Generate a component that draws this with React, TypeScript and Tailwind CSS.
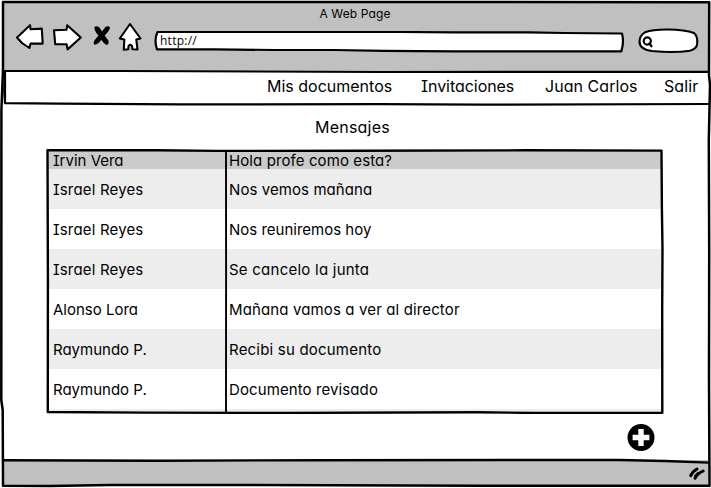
import type { ReactNode } from "react";

type Message = { from: string; text: string; fromFit: string; textFit: string };

const messages: Message[] = [
  { from: "Irvin Vera", text: "Hola profe como esta?", fromFit: "tracking-[0px]", textFit: "tracking-[0.1px]" },
  { from: "Israel Reyes", text: "Nos vemos mañana", fromFit: "tracking-[0.17px]", textFit: "tracking-[0.08px]" },
  { from: "Israel Reyes", text: "Nos reuniremos hoy", fromFit: "tracking-[0.17px]", textFit: "tracking-[0px]" },
  { from: "Israel Reyes", text: "Se cancelo la junta", fromFit: "tracking-[0.17px]", textFit: "tracking-[0.24px]" },
  { from: "Alonso Lora", text: "Mañana vamos a ver al director", fromFit: "tracking-[0px]", textFit: "tracking-[0.13px]" },
  { from: "Raymundo P.", text: "Recibi su documento", fromFit: "tracking-[0px]", textFit: "tracking-[0.2px]" },
  { from: "Raymundo P.", text: "Documento revisado", fromFit: "tracking-[0px]", textFit: "tracking-[0.1px]" },
];

function Ink({ w, h, children }: { w: number; h: number; children: ReactNode }) {
  return (
    <svg
      className="pointer-events-none absolute top-0 left-0"
      width={w}
      height={h}
      viewBox={`0 0 ${w} ${h}`}
      fill="none"
      stroke="#000"
      strokeWidth="2.2"
      strokeLinecap="round"
      strokeLinejoin="round"
    >
      {children}
    </svg>
  );
}

function Toolbar() {
  return (
    <div className="flex h-[46px] items-start pl-[13px]">
      <svg className="shrink-0" width="135" height="30" viewBox="15 22 135 30" fill="#fff" stroke="#000" strokeWidth="2.1" strokeLinejoin="round">
        <path d="M17 37.5 L30 25.2 L30.6 29.3 L41.8 28.6 L42.7 43.6 L30.6 43.5 L29.4 48 L22 43 Z" />
        <path d="M54 30.2 L66.5 29.8 L67.2 25.2 L80.8 37.5 L67.6 49.4 L66.6 44.2 L55.2 44.2 Z" />
        <path
          fill="#000"
          stroke="none"
          d="M94.3 27.3 Q96.5 25 99.5 27.6 L102 31.6 L105.6 26.8 Q108.5 25.3 110 27.2 Q109.5 31 104.6 35.4 L108.4 40.5 Q109.3 44.5 106.5 45 Q103.5 43.5 101.3 39.8 Q98.5 44.3 94.5 44.8 Q92.8 43 94.6 40.3 L98.4 35.6 Q94.5 31.5 94.3 27.3 Z"
        />
        <path d="M130 24 L140.5 38.5 L136.3 39.5 L137.5 49.5 L132.5 49.3 L132 46 Q130 43.8 128.5 46 L128.3 49.2 L123.8 49.8 L124.3 39.6 L119.8 38.5 Z" />
      </svg>
      <div className="relative mt-[9px] ml-[4px] flex h-[21px] w-[472px] items-center">
        <Ink w={472} h={22}>
          <path
            fill="#fff"
            d="M3.5 1 L100 0.9 L246 1 L300 1.4 L375 1.3 L410 2 L468 2.5 Q470.3 11 467.3 20.4 L300 20.4 L230 19.8 L180 19 L120 19 L60 18.3 L3 18.4 Q-0.2 9 3.5 1 Z"
          />
        </Ink>
        <span className="relative -top-px pl-[6px] font-['Open_Sans',sans-serif] text-[12px] leading-4 tracking-[0.25px]">http://</span>
      </div>
      <svg className="mt-[5px] ml-[11px]" width="64" height="28" viewBox="637 27 64 28" fill="#fff" stroke="#000" strokeWidth="2.1" strokeLinecap="round">
        <path d="M645 32.3 Q653 29.3 668 29.5 Q685 29.7 694 33 Q697.5 36 697.3 42 Q697.5 49 690 50.7 Q674 53 652 51 Q639.5 49.5 639.5 41.5 Q639.6 35.5 645 32.3 Z" />
        <circle cx="647.3" cy="41" r="3.6" />
        <path d="M649.5 43.5 L651.5 46.2" strokeWidth="2.3" />
      </svg>
    </div>
  );
}

export default function App() {
  return (
    <main className="relative flex h-[488px] w-[711px] flex-col overflow-hidden bg-white px-[3px] pt-[2px] font-[Inter,'Noto_Sans',sans-serif] text-[15px] leading-5 text-black [font-feature-settings:'cv11','cv08']">
      <header className="-mr-px -ml-px h-[70px] bg-[#c0c0c0]">
        <h1 className="flex h-[20px] items-center justify-center pt-[4px] pr-[1px] text-[12px] leading-4">
          <span className="tracking-[0.12px]">A Web Page</span>
        </h1>
        <Toolbar />
      </header>
      <nav className="flex h-[32px] items-center justify-end gap-[29px] bg-white pr-[9px] pb-[4px] text-[16px]">
        <a className="w-[125px] whitespace-nowrap">Mis documentos</a>
        <a className="w-[94px] tracking-[-0.05px] whitespace-nowrap">Invitaciones</a>
        <a className="ml-[1px] w-[92px] tracking-[0.05px] whitespace-nowrap">Juan Carlos</a>
        <a className="-ml-[2px] w-[35px] tracking-[0.1px] whitespace-nowrap">Salir</a>
      </nav>
      <section className="flex-1 pt-[13px]">
        <h2 className="ml-[312px] h-[20px] text-[16px] tracking-[0.22px]">Mensajes</h2>
        <div className="relative mt-[12px] ml-[43px] h-[265px] w-[618px] overflow-hidden pt-px pr-[2px] pl-[2px]">
          {messages.map((m, i) => (
            <div
              key={i}
              className={`flex items-center ${i === 0 ? "h-[19px] bg-[#cbcbcb] pt-[2px]" : i % 2 ? "h-[40px] bg-[#ededed] pt-[2px]" : "h-[40px] bg-white pt-[2px]"}`}
            >
              <span className={`w-[176px] pl-[5px] whitespace-nowrap ${m.fromFit}`}>{m.from}</span>
              <span className={`pl-[5px] whitespace-nowrap ${m.textFit}`}>{m.text}</span>
            </div>
          ))}
          <div className="h-[4px] bg-[#ededed]" />
          <Ink w={618} h={265}>
            <path d="M1.5 1.2 L110 1.2 L170 1.9 L310 1.8 L480 1.3 L615.5 1.6 L615.9 60 L616.5 100 L616.2 160 L616.3 263.7 L490 264 L430 263.2 L240 263.9 L100 263.6 L1.8 263 L1.9 130 Z" strokeWidth="2.4" />
            <path d="M180 2.5 L180.1 120 L180 263" strokeWidth="1.9" />
          </Ink>
        </div>
        <svg className="mt-[10px] ml-[624px]" width="28" height="28" viewBox="0 0 28 28">
          <circle cx="14" cy="13.5" r="13.5" />
          <path d="M14 5 V22 M5.6 13.5 H22.4" stroke="#fff" strokeWidth="5.4" />
        </svg>
      </section>
      <footer className="mb-[2px] flex h-[26px] items-center justify-end bg-[#c0c0c0] pr-[2px]">
        <svg width="18" height="16" viewBox="688 467 18 16" stroke="#000" fill="none" strokeWidth="3" strokeLinecap="round">
          <path d="M690.7 477.7 Q692.5 473.5 697 471 M695 480.2 Q697.5 475.5 703.2 473" />
          <path d="M694.5 478 L698 474.5" strokeWidth="1.2" />
        </svg>
      </footer>
      <Ink w={711} h={488}>
        <path d="M3 2 L240 1.9 L709.2 2.2 L709 75 L710 85 L708.8 140 L709.2 250 L709 380 L709.5 485.7 L480 485.8 L240 485 L110 485 L50 486 L3 485.7 L2.7 410 L1.3 400 L1.4 110 L3 70 Z" strokeWidth="2.5" />
        <path d="M5 71 L120 71 L380 72 L560 71.8 L709 71.8 M5 71 L5 103.2 L60 103.6 L180 104.4 L380 104.2 L480 104.7 L709 104 M5 71 L4.3 90 L5 103" />
        <path d="M3 460.2 L160 460.7 L320 460.2 L620 460 L665 461 L709 462.6" strokeWidth="2.4" />
      </Ink>
    </main>
  );
}
